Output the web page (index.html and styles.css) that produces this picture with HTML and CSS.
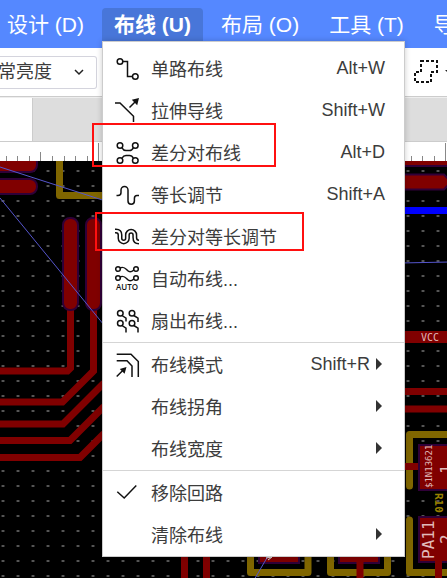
FILE: index.html
```html
<!DOCTYPE html>
<html lang="zh-CN">
<head>
<meta charset="utf-8">
<title>布线</title>
<link rel="stylesheet" href="styles.css">
</head>
<body>
<nav class="menubar">
  <button class="menubar-button" type="button">设计 (D)</button>
  <div class="menubar-open">
    <button class="menubar-button active" type="button">布线 (U)</button>
    <ul class="menu">
      <li><button class="item" type="button">
        <svg class="icon" viewBox="0 0 24 24"><circle cx="5" cy="5.5" r="2.8"/><circle cx="20.3" cy="20.5" r="2.8"/><path d="M8 5.5H12.5V20.5H17.5"/></svg>
        <span class="label">单路布线</span><span class="shortcut">Alt+W</span></button></li>
      <li><button class="item" type="button">
        <svg class="icon" viewBox="0 0 24 24"><path d="M0 5H5L18.5 18.2V24M14.5 9.5L21 3"/><path class="solid" d="M24 0L16.8 1.8L22.2 7.2Z"/></svg>
        <span class="label">拉伸导线</span><span class="shortcut">Shift+W</span></button></li>
      <li><button class="item" type="button">
        <svg class="icon" viewBox="0 0 24 24"><circle cx="5" cy="5.5" r="2.8"/><circle cx="20.3" cy="5.5" r="2.8"/><circle cx="5" cy="20.5" r="2.8"/><circle cx="20.3" cy="20.5" r="2.8"/><path d="M7 7.800Q8.500 10.500 11 10.500H14.500Q17 10.500 18.300 7.800M7 18.200Q8.500 15.500 11 15.500H14.500Q17 15.500 18.300 18.200"/></svg>
        <span class="label">差分对布线</span><span class="shortcut">Alt+D</span></button></li>
      <li><button class="item" type="button">
        <svg class="icon" viewBox="0 0 24 24"><path d="M1.500 13.500H3Q6 13.500 6 10.500V8A3.500 3.500 0 0 1 13 8V19A3.200 3.200 0 0 0 19.400 19V16.500Q19.400 13.500 22 13.500H24"/></svg>
        <span class="label">等长调节</span><span class="shortcut">Shift+A</span></button></li>
      <li><button class="item" type="button">
        <svg class="icon" viewBox="0 0 24 24"><path class="pair" d="M0 7H1Q5 7 5 11V14.200A3.700 3.700 0 0 0 12.400 14.200V11A3.700 3.700 0 0 1 19.800 11V13.500Q19.800 18 24 18"/><path class="pair-gap" d="M0 7H1Q5 7 5 11V14.200A3.700 3.700 0 0 0 12.400 14.200V11A3.700 3.700 0 0 1 19.800 11V13.500Q19.800 18 24 18"/></svg>
        <span class="label">差分对等长调节</span></button></li>
      <li><button class="item" type="button">
        <svg class="icon" viewBox="0 0 24 24"><circle cx="3" cy="3" r="2.3"/><circle cx="21" cy="3" r="2.3"/><circle cx="3" cy="12" r="2.3"/><circle cx="21" cy="12" r="2.3"/><path d="M5 2C9 .2 10.5 2.5 12.5 4.5S16.5 6 18.8 4M5 11C9 9.2 10.5 11.5 12.5 13.5S16.5 15 18.8 13"/><text class="auto" x="12" y="24" text-anchor="middle">AUTO</text></svg>
        <span class="label">自动布线...</span></button></li>
      <li><button class="item" type="button">
        <svg class="icon" viewBox="0 0 24 24"><circle cx="5.3" cy="5.2" r="2.8"/><circle cx="17" cy="5.2" r="2.8"/><circle cx="5.3" cy="15.200" r="2.8"/><circle cx="17" cy="15.200" r="2.8"/><path d="M7 7.500L11 10.200V13.500M18.800 7.500L23 10.200V14M7 17.500L11 20.200V24.500M18.800 17.500L23 20.200V24.500"/></svg>
        <span class="label">扇出布线...</span></button></li>
      <li class="divided"><button class="item" type="button">
        <svg class="icon" viewBox="0 0 24 24"><path d="M1.700 2.200H16L23.300 9.500V25M1.700 8.800H12L17 14V25M1.700 24.500L8 18.300"/><path class="solid" d="M11.500 15L4.800 16.900L9.600 21.700Z"/></svg>
        <span class="label">布线模式</span><span class="shortcut">Shift+R</span><span class="caret"></span></button></li>
      <li><button class="item" type="button"><span class="icon"></span><span class="label">布线拐角</span><span class="caret"></span></button></li>
      <li><button class="item" type="button"><span class="icon"></span><span class="label">布线宽度</span><span class="caret"></span></button></li>
      <li class="divided"><button class="item" type="button">
        <svg class="icon" viewBox="0 0 24 24"><path d="M2.3 11.7L9.2 18L21.3 5.5"/></svg>
        <span class="label">移除回路</span></button></li>
      <li><button class="item" type="button"><span class="icon"></span><span class="label">清除布线</span><span class="caret"></span></button></li>
    </ul>
  </div>
  <button class="menubar-button" type="button">布局 (O)</button>
  <button class="menubar-button" type="button">工具 (T)</button>
  <button class="menubar-button" type="button">导</button>
</nav>

<div class="toolbar">
  <div class="brightness">
    <select aria-label="亮度"><option>常亮度</option></select>
    <svg class="chevron" viewBox="0 0 10 8"><path d="M1 2L5 6L9 2"/></svg>
  </div>
  <button class="tool" type="button" aria-label="合并">
    <svg width="33" height="24" viewBox="0 0 33 24"><path class="union" d="M7 1H23V12H17V22H1V12H7Z"/><path class="tool-caret" d="M31 10H37L34 13Z"/></svg>
  </button>
</div>

<div class="tabs"><div class="tab"></div></div>

<svg class="ruler" aria-hidden="true">
  <path class="ticks" d="M6.5 14V19M17.5 14V19M29.5 14V19M40.5 10V19M52.5 14V19M64.5 14V19M75.5 14V19M87.5 14V19M98.5 1V19M411.5 14V19M422.5 14V19M434.5 14V19M445.5 1V19"/>
</svg>

<main class="board">
  <svg class="pcb" aria-hidden="true">
    <defs>
      <pattern id="grid" x="1" y="8" width="15" height="15" patternUnits="userSpaceOnUse">
        <rect x="0" y="1" width="4" height="2" fill="#262626"/><rect x="1" y="1" width="2" height="2" fill="#555"/>
      </pattern>
    </defs>
    <rect width="100%" height="100%" fill="url(#grid)"/>
    <g transform="translate(0 -161)">
      <g class="gold">
        <path d="M59.5 150V195.5H110"/>
        <path d="M460 434.500H409.500V486M409.500 520V572.500H460"/>
        <path d="M250.500 540V572.500H308V540M330.500 540V572.500H387.500V540"/>
      </g>
      <g class="copper">
        <path d="M70.500 300V368L67.500 371H0M93.500 300V371L62.500 402H0M0 424H63L104 383M0 440.500H70L104 406.500M0 457.500H80L104 433.500"/>
        <path d="M184.500 550V580M206.500 550V580M400 391.500H450M400 409H450M400 466.500H422"/>
        <path class="wide" d="M400 337H450"/>
      </g>
      <g class="pads">
        <rect x="-20" y="155" width="57" height="17" rx="7"/>
        <rect x="-20" y="179" width="57" height="15" rx="7"/>
        <rect x="63" y="218" width="15" height="92" rx="7"/>
        <rect x="86" y="218" width="15" height="92" rx="7"/>
        <path d="M395 150H455V161L447 166H395ZM395 174.500H444L451 182L444 189.500H395Z"/>
        <rect x="419" y="445" width="40" height="45"/>
        <rect x="419" y="517" width="40" height="45"/>
        <rect x="259" y="540" width="40" height="23"/>
        <rect x="339" y="540" width="40" height="23"/>
      </g>
      <path class="copper" d="M438.500 559V580M360 559V580"/>
      <path class="blue" d="M400 210.500H450"/>
      <path class="rats" d="M0 167L104 200.500M0 198L104 325M400 263L450 262M268 556L254 580"/>
      <path class="mark" d="M266 558L272 557L268 560"/>
      <g class="names">
        <text x="421" y="341" font-size="10">VCC</text>
        <text transform="translate(432 488) rotate(-90)" font-size="9">$1N13621</text>
        <text transform="translate(434 559) rotate(-90)" font-size="16">PA11</text>
        <text transform="translate(452 474) rotate(-90)" font-size="16">1</text>
        <text transform="translate(452 544) rotate(-90)" font-size="16">2</text>
        <text class="part" transform="translate(435 493) rotate(90)" font-size="11">R10</text>
      </g>
    </g>
  </svg>
</main>

<div class="callout routing"></div>
<div class="callout tuning"></div>
</body>
</html>
```
FILE: styles.css
```css
* { box-sizing: border-box; }

body {
  margin: 0;
  min-height: 100vh;
  display: flex;
  flex-direction: column;
  position: relative;
  overflow: hidden;
  background: #fff;
  color: #3c3c3c;
  font-family: "Liberation Sans", "Noto Sans CJK SC", sans-serif;
  font-size: 18px;
}

button, select { font: inherit; color: inherit; border: 0; background: none; }

.menubar {
  display: flex;
  gap: 6px;
  height: 48px;
  padding-top: 8px;
  margin-left: -5px;
  background: #5588ff;
  color: #fff;
}

.menubar-button {
  height: 33px;
  padding: 0 12px;
  border-radius: 4px 4px 0 0;
  font-size: 21px;
  line-height: 33px;
  white-space: nowrap;
}

.menubar-button.active { background: #4876d9; font-weight: bold; }
.menubar-open { position: relative; }

.menu {
  position: absolute;
  z-index: 2;
  top: 33px;
  left: 0;
  width: 303px;
  margin: 0;
  padding: 5px 0 1px;
  list-style: none;
  background: #fff;
  border: 1px solid #ccc;
  box-shadow: 0 0 6px rgba(0, 0, 0, .2);
  color: #3c3c3c;
}

.divided { margin-top: 1px; border-top: 1px solid #d5d5d5; }

.item {
  display: flex;
  align-items: center;
  gap: 12px;
  width: 100%;
  height: 42px;
  padding: 0 19px 0 12px;
  text-align: left;
}

.icon {
  flex: none;
  width: 24px;
  height: 24px;
  fill: none;
  stroke: #111;
  stroke-width: 1.5;
  overflow: visible;
}

.icon .solid { fill: #111; stroke: none; }
.icon .pair { stroke-width: 5; }
.icon .pair-gap { stroke: #fff; stroke-width: 2; }
.icon .auto { font: 600 8px "Open Sans", sans-serif; fill: #111; stroke: none; }

.label { flex: 1; }

.caret {
  margin: 0 3px 0 -6px;
  border: solid transparent;
  border-width: 6px 0 6px 6px;
  border-left-color: #333;
}

.toolbar {
  display: flex;
  align-items: center;
  justify-content: space-between;
  height: 49px;
  border-bottom: 1px solid #ccc;
}

.brightness {
  position: relative;
  display: flex;
  align-items: center;
  width: 97px;
  height: 33px;
  border: 1px solid #d4d4dd;
  border-left: 0;
  border-radius: 0 3px 3px 0;
}

.brightness select {
  appearance: none;
  width: 100%;
  height: 100%;
  margin-left: -2px;
  padding: 0;
}

.chevron {
  position: absolute;
  right: 12px;
  width: 10px;
  height: 8px;
  fill: none;
  stroke: #222;
  stroke-width: 1.5;
  pointer-events: none;
}

.tool { display: flex; padding: 0; }
.union { fill: none; stroke: #111; stroke-width: 2; stroke-dasharray: 3 2; }
.tool-caret { fill: #222; }

.tabs { height: 45px; background: #ddd; border-top: 1px solid #eee; border-bottom: 1px solid #ccc; }
.tab { width: 33px; height: 100%; background: #fff; border-right: 1px solid #ccc; }

.ruler { display: block; width: 100%; height: 19px; background: #fff; }
.ticks { stroke: #888; fill: none; }

.board { flex: 1; display: flex; background: #000; }
.pcb { flex: 1; width: 100%; }

.gold { fill: none; stroke: #806600; stroke-width: 7; stroke-linejoin: round; stroke-linecap: round; }
.copper { fill: none; stroke: #800000; stroke-width: 7; }
.copper .wide { stroke-width: 12; }
.pads { fill: #800000; stroke: #300038; stroke-width: 2; }
.blue { stroke: #0000ff; stroke-width: 7; }
.rats { fill: none; stroke: #5555cc; stroke-width: 1; }
.mark { fill: none; stroke: #ddd; }
.names { fill: #e0baba; font-family: "DejaVu Sans Mono", monospace; }
.part { fill: #998000; font-weight: bold; }

.callout { position: absolute; z-index: 3; border: 2px solid #ff1010; pointer-events: none; }
.routing { left: 92px; top: 123px; width: 184px; height: 44px; }
.tuning { left: 95px; top: 212px; width: 209px; height: 39px; }
```
